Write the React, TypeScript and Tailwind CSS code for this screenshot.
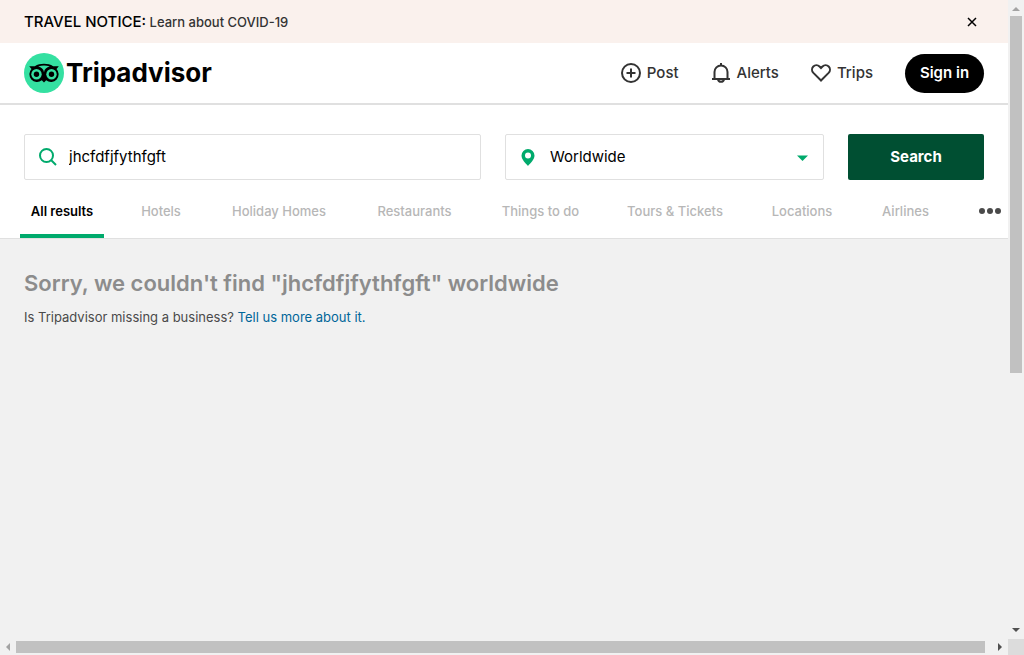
import { useState } from "react";

const tabs = [
  { label: "All results", width: "w-[84px]" },
  { label: "Hotels", width: "w-[66px]" },
  { label: "Holiday Homes", width: "w-[122px]" },
  { label: "Restaurants", width: "w-[101px]" },
  { label: "Things to do", width: "w-[103px]" },
  { label: "Tours & Tickets", width: "w-[118px]" },
  { label: "Locations", width: "w-[88px]" },
  { label: "Airlines", width: "w-[71px]" },
];

function OwlMark() {
  return (
    <svg viewBox="0 0 40 40" className="size-10 shrink-0" aria-hidden="true">
      <circle cx="20" cy="20" r="20" fill="#34e0a1" />
      <path
        d="M5.200 13.200h5.600C13.500 11.600 16.600 10.800 20 10.800s6.500.8 9.200 2.400h5.600l-2.300 2.700a7.700 7.700 0 0 1-10.300 11.400L20 29.600l-2.200-2.300A7.700 7.700 0 0 1 7.500 15.900z"
        fill="#000"
      />
      <path d="M14.200 13.600c1.800-.7 3.700-1 5.800-1s4 .3 5.800 1c-3.100.5-5.400 2.700-5.800 5.600-.4-2.900-2.700-5.100-5.800-5.600z" fill="#34e0a1" />
      <circle cx="12.500" cy="21.300" r="5.200" fill="#34e0a1" />
      <circle cx="27.500" cy="21.300" r="5.200" fill="#34e0a1" />
      <circle cx="12.500" cy="21.300" r="2.700" fill="#000" />
      <circle cx="27.500" cy="21.300" r="2.700" fill="#000" />
    </svg>
  );
}

function NoticeBar() {
  return (
    <div className="flex h-[43px] items-center justify-between bg-[#faf1ed] px-6">
      <p className="text-[13px] leading-5 font-medium text-[#333]">
        <strong className="text-[15px] font-medium text-black">TRAVEL NOTICE:</strong>{" "}
        <a href="#covid">Learn about COVID-19</a>
      </p>
      <button type="button" aria-label="Close notice" className="flex size-6 items-center justify-center">
        <svg viewBox="0 0 10 10" className="size-[10px]" fill="none" stroke="#000" strokeWidth="1.5">
          <path d="M1 1l8 8M9 1l-8 8" />
        </svg>
      </button>
    </div>
  );
}

function Header() {
  return (
    <header className="flex h-[62px] items-center justify-between border-b-2 border-[#e0e0e0] px-6">
      <a href="#home" className="flex items-center gap-[2px] text-black">
        <OwlMark />
        <span className="text-[26px] leading-8 font-bold">
          Tripadvisor
        </span>
      </a>
      <nav className="flex items-center gap-8 text-[15px] font-medium text-[#333]">
        <a href="#post" className="flex items-center gap-[6px]">
          <svg viewBox="0 0 20 20" className="size-5" fill="none" stroke="#333" strokeWidth="2">
            <circle cx="10" cy="10" r="9" />
            <path d="M10 5.500v9M5.500 10h9" />
          </svg>
          Post
        </a>
        <a href="#alerts" className="flex items-center gap-[6px]">
          <svg viewBox="0 0 20 20" className="size-5" fill="none" stroke="#333" strokeWidth="2">
            <path d="M1 16h18M3.500 16V9a6.500 6.500 0 0 1 13 0v7M10 0v3M7 16.500c.3 1.500 1.400 2.300 3 2.300s2.700-.8 3-2.300" />
          </svg>
          Alerts
        </a>
        <a href="#trips" className="flex items-center gap-[6px]">
          <svg viewBox="0 0 20 20" className="size-5" fill="none" stroke="#333" strokeWidth="2">
            <path d="M10 17.500L2.400 9.900C.6 8 .6 5.200 2.300 3.500s4.500-1.700 6.200 0L10 5l1.500-1.500c1.700-1.700 4.500-1.700 6.200 0s1.700 4.500-.1 6.400z" />
          </svg>
          Trips
        </a>
        <a
          href="#signin"
          className="flex h-[39px] w-[79px] items-center justify-center rounded-full bg-black font-semibold text-white"
        >
          Sign in
        </a>
      </nav>
    </header>
  );
}

function SearchForm() {
  const [query, setQuery] = useState("jhcfdfjfythfgft");
  return (
    <form className="flex gap-6 px-6 pt-[29px]" onSubmit={(e) => e.preventDefault()}>
      <label className="flex h-[46px] min-w-0 flex-1 items-center gap-3 rounded-[2px] border border-[#e0e0e0] px-[14px]">
        <svg viewBox="0 0 18 18" className="size-[18px] shrink-0" fill="none" stroke="#00aa6c" strokeWidth="2">
          <circle cx="7.500" cy="7.500" r="6.500" />
          <path d="M12 12l5 5" />
        </svg>
        <input
          type="text"
          aria-label="Search query"
          value={query}
          onChange={(e) => setQuery(e.target.value)}
          className="w-full min-w-0 text-[15px] text-black outline-none"
        />
      </label>
      <label className="flex h-[46px] w-[319px] items-center gap-[15px] rounded-[2px] border border-[#e0e0e0] px-[15px]">
        <svg viewBox="0 0 14 17" className="h-[17px] w-[14px] shrink-0" fill="#00aa6c">
          <path fillRule="evenodd" d="M7 0a6.500 6.500 0 0 1 6.500 6.500C13.500 10.500 9.500 14 7 17 4.500 14 .5 10.500.5 6.500A6.500 6.500 0 0 1 7 0zm0 3.500a3 3 0 1 0 0 6 3 3 0 0 0 0-6z" />
        </svg>
        <select aria-label="Location" className="min-w-0 flex-1 appearance-none bg-transparent text-[15px] text-black outline-none">
          <option>Worldwide</option>
        </select>
        <svg viewBox="0 0 11 8" className="h-2 w-[11px] shrink-0" fill="#00aa6c">
          <path d="M0 2.500h11L5.500 8z" />
        </svg>
      </label>
      <button type="submit" className="h-[46px] w-[136px] rounded-[2px] bg-[#004f32] text-[15px] font-bold text-white">
        Search
      </button>
    </form>
  );
}

function Tabs() {
  return (
    <nav className="flex h-[59px] gap-6 overflow-hidden border-b border-[#e0e0e0] pl-5 text-[13px] whitespace-nowrap">
      {tabs.map(({ label, width }, i) => (
        <a
          key={label}
          href="#results"
          className={`${width} shrink-0 pt-[21px] text-center leading-5 ${
            i === 0
              ? "border-b-4 border-[#00aa6c] font-semibold text-black"
              : "font-medium text-[#b7b7b7]"
          }`}
        >
          {label}
        </a>
      ))}
      <button type="button" aria-label="More" className="mt-[21px] mr-[7px] ml-auto flex h-5 shrink-0 items-center">
        <svg viewBox="0 0 22 6" className="h-[6px] w-[22px]" fill="#4a4a4a">
          <circle cx="3" cy="3" r="3" />
          <circle cx="11" cy="3" r="3" />
          <circle cx="19" cy="3" r="3" />
        </svg>
      </button>
    </nav>
  );
}

export default function App() {
  return (
    <div className="grid h-screen grid-cols-[minmax(0,1fr)_16px] grid-rows-[minmax(0,1fr)_16px] bg-[#f1f1f1] font-['Inter',sans-serif]">
      <div className="overflow-hidden">
        <div className="bg-white">
          <NoticeBar />
          <Header />
          <SearchForm />
          <Tabs />
        </div>
        <main className="px-6 pt-7">
          <h1 className="text-[22px] leading-8 font-semibold text-[#8c8c8c]">
            Sorry, we couldn't find "jhcfdfjfythfgft" worldwide
          </h1>
          <p className="mt-2 text-[13px] leading-5 text-[#4a4a4a]">
            Is Tripadvisor missing a business?{" "}
            <a href="#tell-us" className="text-[#069]">
              Tell us more about it.
            </a>
          </p>
        </main>
      </div>
      <div className="flex flex-col items-center justify-between">
        <svg viewBox="0 0 16 16" className="size-4 shrink-0" fill="#a3a3a3">
          <path d="M4 11l4-4 4 4z" />
        </svg>
        <div className="w-3 grow-[357] basis-0 bg-[#c1c1c1]" />
        <div className="grow-[250] basis-0" />
        <svg viewBox="0 0 16 16" className="size-4 shrink-0" fill="#505050">
          <path d="M4 5l4 4 4-4z" />
        </svg>
      </div>
      <div className="flex items-center">
        <svg viewBox="0 0 16 16" className="size-4 shrink-0" fill="#a3a3a3">
          <path d="M10 4L6 8l4 4z" />
        </svg>
        <div className="h-3 grow-[969] basis-0 bg-[#c1c1c1]" />
        <div className="grow-[7] basis-0" />
        <svg viewBox="0 0 16 16" className="size-4 shrink-0" fill="#505050">
          <path d="M6 4l4 4-4 4z" />
        </svg>
      </div>
      <div className="bg-[#dcdcdc]" />
    </div>
  );
}
